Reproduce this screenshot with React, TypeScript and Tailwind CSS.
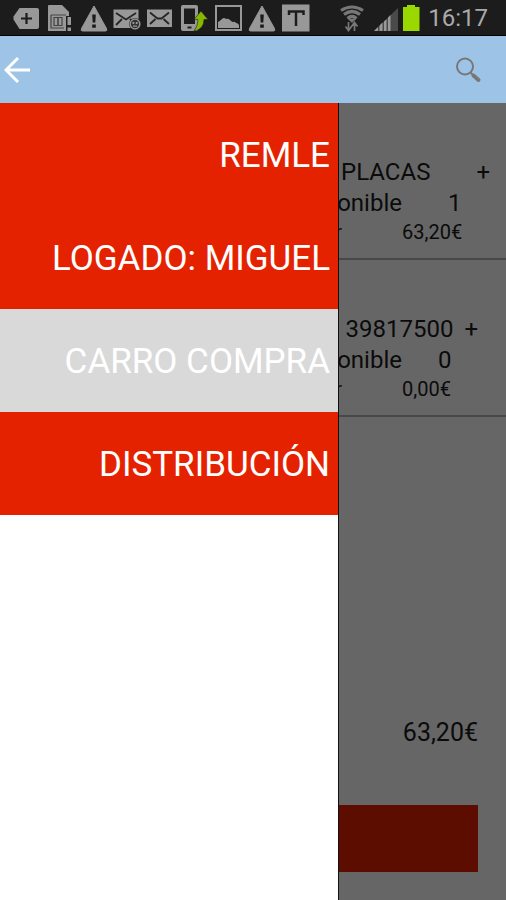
import type { ReactNode } from "react";

function StatusIcon({ children }: { children: ReactNode }) {
  return (
    <svg viewBox="0 0 28 28" className="h-7 w-7 shrink-0" fill="#989898" aria-hidden="true">
      {children}
    </svg>
  );
}

function Warning() {
  return (
    <StatusIcon>
      <path d="M14 2 26.500 24.500Q27.500 27 25.500 27H2.500Q.5 27 1.500 24.500Z" stroke="#989898" strokeWidth="1" strokeLinejoin="round" />
      <path d="M12.200 10.500h3.600l-.5 8h-2.600ZM12.200 20.500h3.600v3.200h-3.600Z" fill="#1a1a1a" />
    </StatusIcon>
  );
}

function StatusBar() {
  return (
    <div className="flex h-9 items-center justify-between border-b border-black bg-[#1c1c1c] pr-[18px] pl-3">
      <div className="flex w-[298px] justify-between">
        <StatusIcon>
          <path d="M7.500 4H25q2 0 2 2v17q0 2-2 2H7.500L1.500 15.500v-3Z" />
          <path d="M14.500 9v11M9 14.500h11" stroke="#1c1c1c" strokeWidth="2.200" />
        </StatusIcon>
        <StatusIcon>
          <path d="M2 2q0-1 1-1h13l7 7v19H2Z" />
          <path d="M5 11h15M5 11v13h13M8 13v9M8 13.500h8M8 21.500h8M16 13v9" stroke="#444" strokeWidth="1.200" fill="none" />
          <path d="M11 14h2v7h-2Z" fill="#555" />
          <path d="M20 12h6v16h-6Z" fill="#1c1c1c" />
          <path d="M21.500 13h3.500v8h-3.500ZM21.500 23.500h3.500V27h-3.500Z" />
        </StatusIcon>
        <Warning />
        <StatusIcon>
          <path d="M.5 5.500h25V24H.5Z" />
          <path d="m3 9 10 6.500L23 9M3 21l6-6M23 21l-6-6" stroke="#252525" strokeWidth="1.800" fill="none" />
          <circle cx="22" cy="20" r="6" fill="#333" />
          <circle cx="22" cy="20" r="4.800" fill="none" stroke="#999" strokeWidth="1.300" />
          <path d="M19.500 18h1.800v2h-1.800ZM22.800 18h1.800v2h-1.800ZM20 21.500h4v1.200h-4Z" />
        </StatusIcon>
        <StatusIcon>
          <path d="M0 5.500h25V23H0Z" />
          <path d="m3 8.500 7.500 6h4L22 8.500M3 20l5.500-5M22 20l-5.500-5" stroke="#252525" strokeWidth="1.800" fill="none" />
        </StatusIcon>
        <StatusIcon>
          <path d="M2 1h13q2 0 2 2v22q0 2-2 2H2q-2 0-2-2V3q0-2 2-2Z" />
          <path d="M3 4.500h11V20H3ZM6.500 22.500h4V24.500h-4Z" fill="#1c1c1c" />
          <path d="m20 7 7 8.500h-4q0 10-10 11.500 4-5 4-11.500h-4Z" fill="#86b800" stroke="#1c1c1c" strokeWidth=".6" />
        </StatusIcon>
        <StatusIcon>
          <path d="M0 1h27v26H0ZM2 3v22h23V3Z" fillRule="evenodd" />
          <path d="M3 18q2-1 4-3 2-2 4 0 2-1 4 1t3 2q2-1 3 1 2 0 3 2v3H3Z" />
        </StatusIcon>
        <Warning />
        <StatusIcon>
          <path d="M0 .5h27.500v27H0Z" />
          <path d="M7 11V7.500h14.500V11M14 7v15" stroke="#1c1c1c" strokeWidth="2.500" fill="none" />
        </StatusIcon>
      </div>
      <div className="flex items-center">
        <svg viewBox="0 0 24 28" className="mr-2.5 h-7 w-6" fill="none" stroke="#777" aria-hidden="true">
          <path d="M1 6.500q11-7 22 0M4 10.500q8-6 16 0M7.500 14.500q4.500-4 9 0" strokeWidth="3.200" />
          <path d="m9 15.500 3 3 3-3Z" fill="#777" />
          <path d="M8.500 18v8M5.500 22.500l3 4 3-4M14.500 27v-8M11.500 22.500l3-4 3 4" strokeWidth="1.700" />
        </svg>
        <svg viewBox="0 0 24 28" className="mr-1 h-7 w-6" aria-hidden="true">
          <path d="M0 27 24 4v23Z" fill="#4a4a4a" />
          <path d="M0 27l4-4v4ZM5.500 21.500l3-3V27h-3ZM10 17.500l2.500-2.500v12H10ZM14 13.500l2.500-2.500v16H14Z" fill="#999" />
        </svg>
        <svg viewBox="0 0 18 28" className="mr-2 h-7 w-[18px]" fill="#99d900" aria-hidden="true">
          <path d="M5 1h8v2h4.500v24H1V3h4Z" />
        </svg>
        <time className="text-2xl leading-none text-[#aaaaaa]">16:17</time>
      </div>
    </div>
  );
}

type Item = {
  name: string;
  nameClass: string;
  stock: string;
  stockClass: string;
  price: string;
};

const items: Item[] = [
  { name: "PLACAS", nameClass: "gap-[46px] pr-4", stock: "1", stockClass: "pl-[46px]", price: "63,20€" },
  { name: "39817500", nameClass: "gap-[11px] pr-7", stock: "0", stockClass: "pl-9", price: "0,00€" },
];

function CartItem({ item }: { item: Item }) {
  return (
    <li className="h-[157px] border-b-2 border-[#b4b4b4] pt-[54px] text-2xl leading-[31px]">
      <div className={`flex justify-end ${item.nameClass}`}>
        <span>{item.name}</span>
        <button type="button" aria-label="Añadir">+</button>
      </div>
      <div className="flex">
        <span className="flex-1 text-right">ponible</span>
        <span className={`w-[104px] ${item.stockClass}`}>{item.stock}</span>
      </div>
      <div className="flex text-xl leading-[26px]">
        <span className="flex-1 pr-[60px] text-right">r</span>
        <span className="w-[104px]">{item.price}</span>
      </div>
    </li>
  );
}

const menu = [
  { label: "REMLE", active: false },
  { label: "LOGADO: MIGUEL", active: false },
  { label: "CARRO COMPRA", active: true },
  { label: "DISTRIBUCIÓN", active: false },
];

export default function App() {
  return (
    <div className="flex min-h-screen flex-col bg-white font-['Roboto','Noto_Sans',sans-serif] text-[#1c1c1c]">
      <StatusBar />
      <header className="flex h-[67px] items-center justify-between bg-[#9dc4e6] pr-6 pl-1">
        <button type="button" aria-label="Volver">
          <svg viewBox="0 0 28 28" className="h-7 w-7" fill="none" stroke="white" strokeWidth="3" aria-hidden="true">
            <path d="M26 14H2M14 2 2 14l12 12" />
          </svg>
        </button>
        <button type="button" aria-label="Buscar">
          <svg viewBox="0 0 28 28" className="h-7 w-7" fill="none" stroke="#777" aria-hidden="true">
            <circle cx="11" cy="10.500" r="8" strokeWidth="2" />
            <path d="m16.500 16.500 3 3" strokeWidth="2" />
            <path d="m19.500 19.500 5 4.500" strokeWidth="4" strokeLinecap="round" />
          </svg>
        </button>
      </header>
      <div className="relative flex flex-1 flex-col">
        <main className="flex flex-1 flex-col">
          <ul>
            {items.map((item) => (
              <CartItem key={item.name} item={item} />
            ))}
          </ul>
          <div className="mt-auto flex flex-col gap-14 px-7 pb-7">
            <p className="text-right text-[25px] leading-8">63,20€</p>
            <button type="button" aria-label="Comprar" className="h-[67px] bg-[#e52200]" />
          </div>
        </main>
        <div className="absolute inset-0 bg-black/60" />
        <nav className="absolute inset-y-0 left-0 w-[67%] border-r border-[#111111] bg-white">
          <ul>
            {menu.map(({ label, active }) => (
              <li key={label}>
                <button
                  type="button"
                  className={`block h-[103px] w-full pt-1 pr-2 text-right text-[35px] text-white ${active ? "bg-[#d9d9d9]" : "bg-[#e52200]"}`}
                >
                  {label}
                </button>
              </li>
            ))}
          </ul>
        </nav>
      </div>
    </div>
  );
}
